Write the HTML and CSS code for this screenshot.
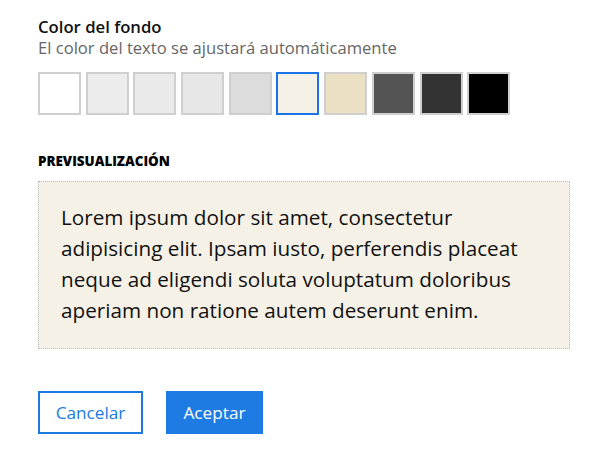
FILE: index.html
```html
<!DOCTYPE html>
<html lang="es">
<head>
<meta charset="utf-8">
<link rel="stylesheet" href="styles.css">
</head>
<body>
<div class="panel">
  <div class="title">Color del fondo</div>
  <div class="subtitle">El color del texto se ajustará automáticamente</div>
  <div class="swatches">
    <div class="swatch" style="background:#ffffff"></div>
    <div class="swatch" style="background:#ececec"></div>
    <div class="swatch" style="background:#eaeaea"></div>
    <div class="swatch" style="background:#e7e7e7"></div>
    <div class="swatch" style="background:#dcdcdc"></div>
    <div class="swatch selected" style="background:#f6f1e7"></div>
    <div class="swatch" style="background:#ebe0c4"></div>
    <div class="swatch" style="background:#545454"></div>
    <div class="swatch" style="background:#333333"></div>
    <div class="swatch" style="background:#000000"></div>
  </div>
  <div class="label">PREVISUALIZACIÓN</div>
  <div class="preview">Lorem ipsum dolor sit amet, consectetur adipisicing elit. Ipsam iusto, perferendis placeat neque ad eligendi soluta voluptatum doloribus aperiam non ratione autem deserunt enim.</div>
  <div class="actions">
    <button class="btn btn-outline">Cancelar</button>
    <button class="btn btn-primary">Aceptar</button>
  </div>
</div>
</body>
</html>
```
FILE: styles.css
```css
* { box-sizing: border-box; }
html, body { margin: 0; padding: 0; background: #fff; }
body { font-family: "Open Sans", "Noto Sans", sans-serif; color: #111; }
.panel { padding: 17px 41px 0 38px; }
.title { font-size: 16.7px; font-weight: 600; line-height: 20px; color: #111; }
.subtitle { font-size: 16.6px; line-height: 22px; color: #666; }
.swatches { display: flex; gap: 4.7px; margin-top: 13px; }
.swatch { width: 43px; height: 43px; border: 2px solid #cfcfcf; }
.swatch.selected { border-color: #1a73e8; }
.label { font-size: 13.4px; font-weight: 800; line-height: 16px; margin-top: 38px; color: #000; }
.preview { margin-top: 12px; width: 532px; height: 168px; background: #f6f1e7; border: 1px dotted #bbb; padding: 20px 22px 0 22px; font-size: 20.7px; line-height: 31px; color: #111; }
.actions { display: flex; gap: 23px; margin-top: 42px; }
.btn { font-family: "Open Sans", "Noto Sans", sans-serif; font-size: 17.2px; height: 43px; padding: 0; cursor: pointer; }
.btn-outline { width: 105px; background: #fff; color: #1a7ae0; border: 2px solid #1a7ae0; }
.btn-primary { width: 97px; background: #1e7be3; color: #fff; border: none; }
```
